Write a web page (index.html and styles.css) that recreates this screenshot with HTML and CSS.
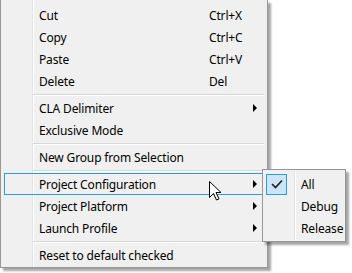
FILE: index.html
```html
<!DOCTYPE html>
<html lang="en">
<head>
  <meta charset="UTF-8" />
  <title>Context Menu</title>
  <link rel="stylesheet" href="styles.css">
</head>
<body>

  <!-- Main context menu -->
  <div class="menu">
    <div class="item"><span class="label">Cut</span><span class="key">Ctrl+X</span></div>
    <div class="item"><span class="label">Copy</span><span class="key">Ctrl+C</span></div>
    <div class="item"><span class="label">Paste</span><span class="key">Ctrl+V</span></div>
    <div class="item"><span class="label">Delete</span><span class="key">Del</span></div>
    <div class="sep"></div>
    <div class="item"><span class="label">CLA Delimiter</span><span class="arrow"></span></div>
    <div class="item"><span class="label">Exclusive Mode</span></div>
    <div class="sep"></div>
    <div class="item"><span class="label">New Group from Selection</span></div>
    <div class="sep"></div>
    <div class="item active"><span class="label">Project Configuration</span><span class="arrow"></span></div>
    <div class="item"><span class="label">Project Platform</span><span class="arrow"></span></div>
    <div class="item"><span class="label">Launch Profile</span><span class="arrow"></span></div>
    <div class="sep"></div>
    <div class="item"><span class="label">Reset to default checked</span></div>
  </div>

  <!-- Submenu -->
  <div class="menu submenu">
    <div class="item checked">
      <span class="check">
        <svg viewBox="0 0 12 10" width="12" height="10">
          <path d="M1 5 L4.5 8.5 L11 1.5" fill="none" stroke="#222" stroke-width="1.7"/>
        </svg>
      </span>
      <span class="label">All</span>
    </div>
    <div class="item"><span class="check"></span><span class="label">Debug</span></div>
    <div class="item"><span class="check"></span><span class="label">Release</span></div>
  </div>

  <!-- Mouse pointer -->
  <svg class="cursor" viewBox="0 0 13 20" width="13" height="20">
    <path d="M0.5 0.5 L0.5 16.5 L4.5 12.5 L7.5 19 L10 18 L7 11.5 L12 11.5 Z" fill="#fff" stroke="#000" stroke-width="1"/>
  </svg>

</body>
</html>
```

FILE: styles.css
```css
* { box-sizing: border-box; }
body {
  margin: 0;
  background: #fff;
  font-family: 'Segoe UI', 'Noto Sans', sans-serif;
  font-size: 12px;
  letter-spacing: -0.15px;
  color: #000;
  position: relative;
  height: 273px;
  overflow: hidden;
}
.menu {
  width: 268px;
  background: linear-gradient(to right, #f0f0f0 31px, #e2e3e3 31px, #e2e3e3 32px, #fff 32px, #fff 33px, #f0f0f0 33px);
  border: 1px solid #979797;
  border-top: none;
  padding: 4px 3px 1px 3px;
  box-shadow: 3px 3px 2px rgba(0, 0, 0, 0.35);
}
.item {
  display: flex;
  align-items: center;
  height: 22px;
  padding-left: 34px;
  padding-right: 6px;
  border: 1px solid transparent;
  white-space: nowrap;
}
.item .label {
  width: 170px;
  flex-shrink: 0;
}
.item .key {
  flex: 1;
}
.item.active {
  border-color: #26a0da;
}
.arrow {
  margin-left: auto;
  width: 0;
  height: 0;
  border-left: 4px solid #000;
  border-top: 4px solid transparent;
  border-bottom: 4px solid transparent;
}
.sep {
  height: 5px;
  margin-left: 29px;
  padding-top: 2px;
}
.sep::before {
  content: "";
  display: block;
  height: 1px;
  background: #d7d7d7;
  border-bottom: 1px solid #fff;
  box-sizing: content-box;
}

/* Submenu */
.submenu {
  position: absolute;
  left: 262px;
  top: 169px;
  width: 84px;
  border-top: 1px solid #979797;
  padding: 3px 1px 2px 3px;
}
.submenu .item {
  padding: 0;
  border: none;
}
.submenu .label {
  width: auto;
  margin-left: 14px;
}
.check {
  width: 21px;
  height: 22px;
  flex-shrink: 0;
  display: flex;
  align-items: center;
  justify-content: center;
  border: 1px solid transparent;
}
.checked .check {
  background: #cce4f7;
  border-color: #26a0da;
  height: 21px;
}
.cursor {
  position: absolute;
  left: 209px;
  top: 181px;
}
```
